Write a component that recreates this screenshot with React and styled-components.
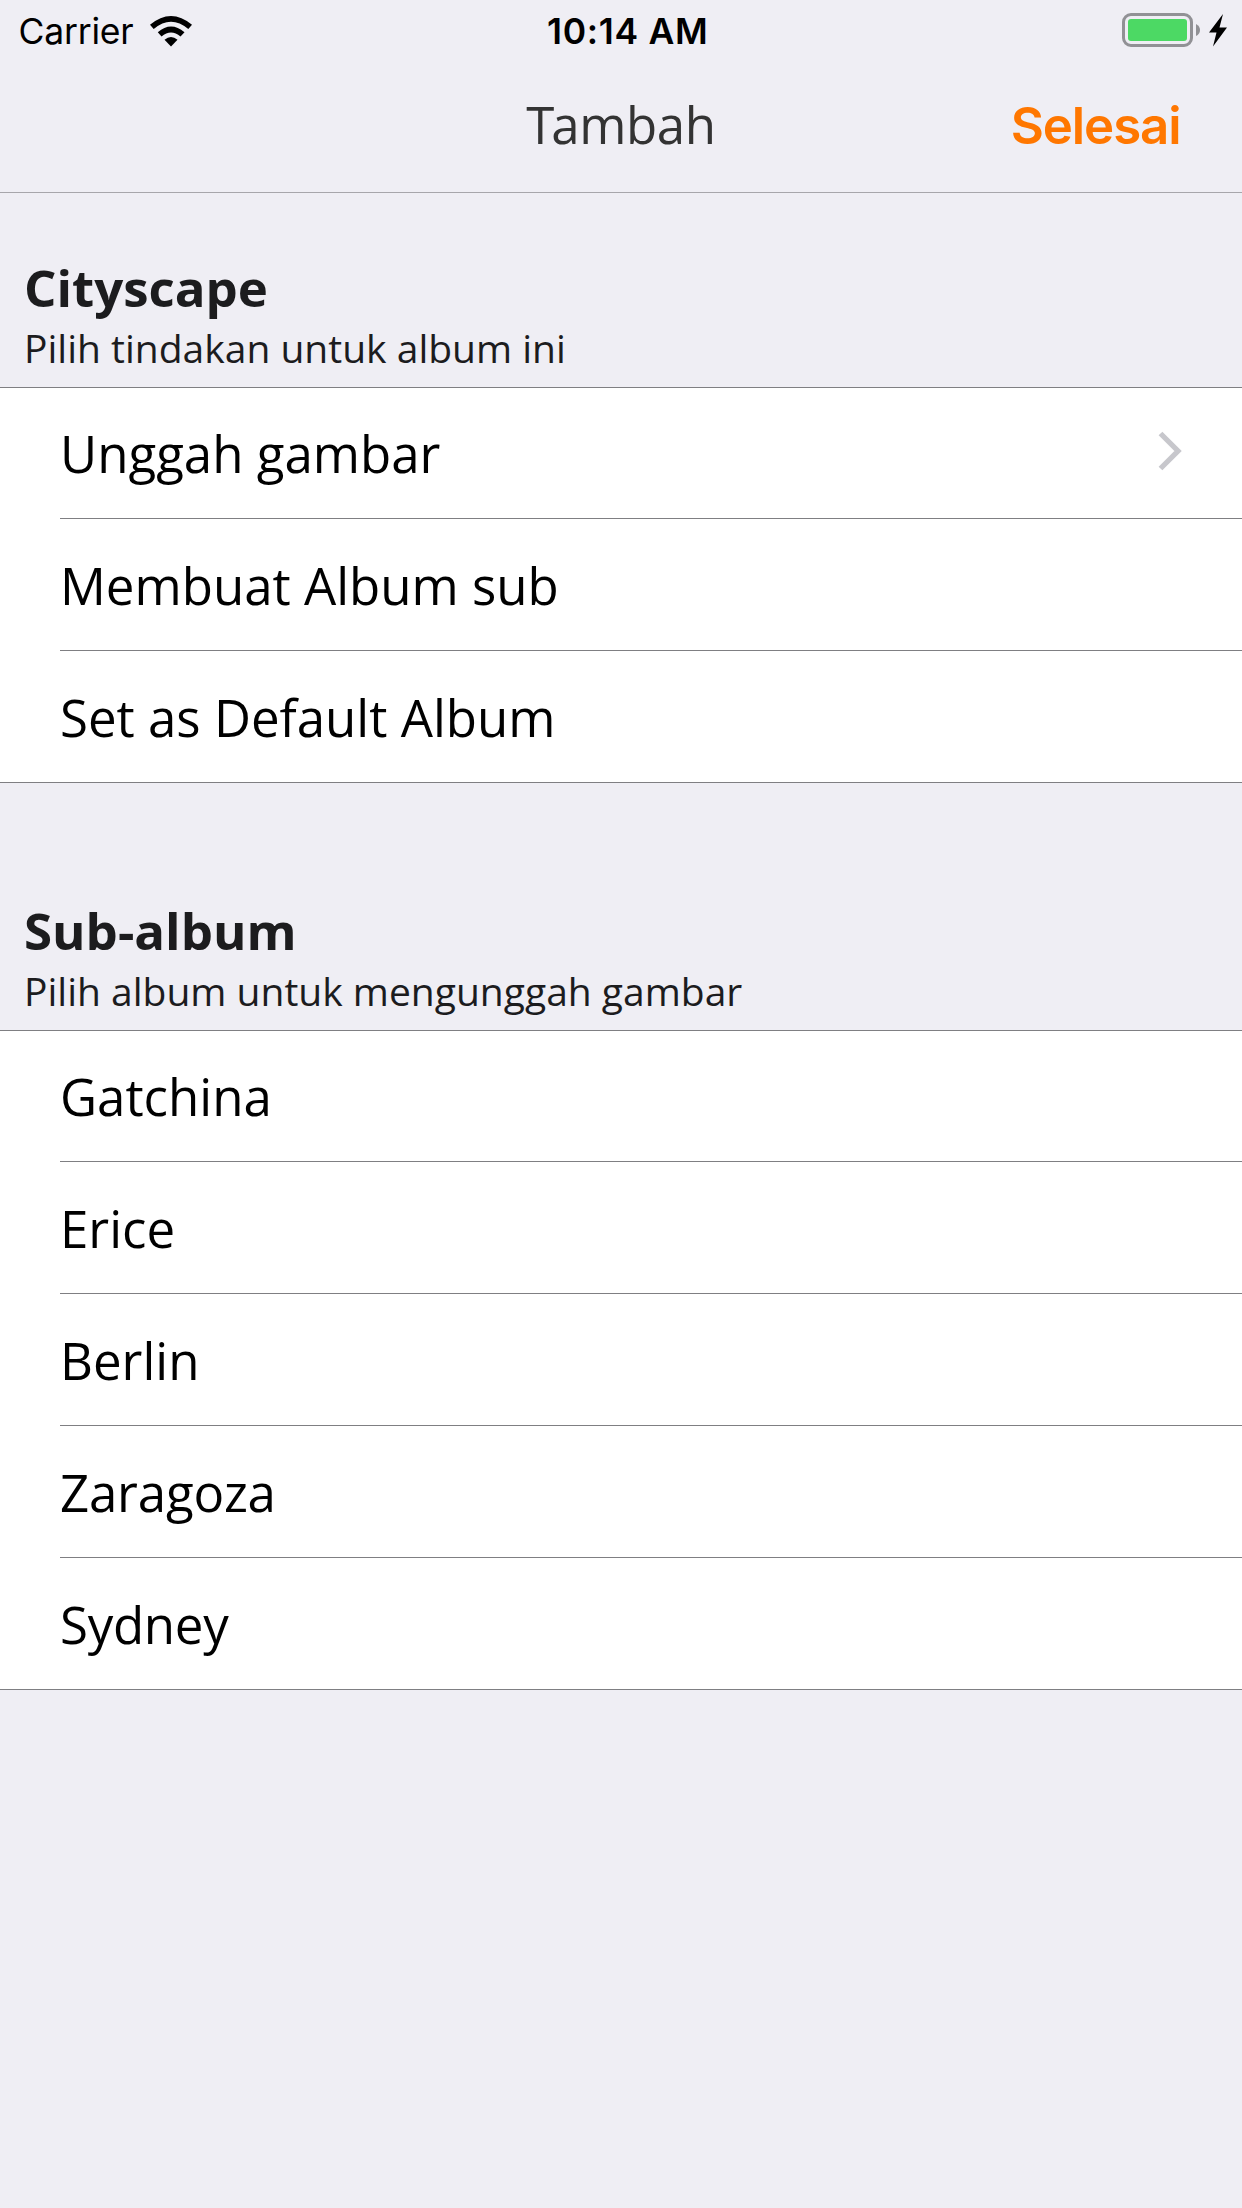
import React from "react";
import styled, { createGlobalStyle } from "styled-components";

const GlobalStyle = createGlobalStyle`
  * { box-sizing: border-box; }
  body { margin: 0; background: #efeef4; }
`;

const Screen = styled.div`
  width: 1242px;
  min-height: 2208px;
  background: #efeef4;
  font-family: "Open Sans", "Noto Sans", sans-serif;
  white-space: nowrap;
`;

const Header = styled.header`
  height: 193px;
  border-bottom: 1px solid #a7a6ab;
`;

const StatusBar = styled.div`
  height: 60px;
  display: grid;
  grid-template-columns: 1fr auto 1fr;
  align-items: center;
  padding: 2px 14px 0 18.5px;
  font-family: Inter, "Liberation Sans", sans-serif;
  font-size: 35.5px;
  color: #000;
`;

const Carrier = styled.div`
  display: flex;
  align-items: center;
  gap: 17px;
  letter-spacing: -0.2px;
`;

const Time = styled.div`
  font-weight: 600;
  letter-spacing: 0.7px;
  padding-left: 9px;
`;

const Power = styled.div`
  display: flex;
  justify-content: flex-end;
  padding-bottom: 2px;
`;

const NavBar = styled.nav`
  height: 132px;
  display: grid;
  grid-template-columns: 1fr auto 1fr;
  align-items: center;
`;

const Title = styled.h1`
  grid-column: 2;
  margin: 0;
  padding: 0 0 4px;
  font-size: 51px;
  line-height: 70px;
  font-weight: 400;
  letter-spacing: -0.4px;
  color: #333;

  &::first-letter {
    letter-spacing: -3.2px;
  }
`;

const DoneButton = styled.button`
  justify-self: end;
  margin: 0 61.5px 0 0;
  padding: 0;
  border: 0;
  background: none;
  font: 600 51px/70px Inter, "Liberation Sans", sans-serif;
  letter-spacing: -1.1px;
  color: #ff7700;
`;

const SectionHead = styled.div`
  height: ${(p) => p.$height}px;
  padding: 0 24px 13px;
  display: flex;
  flex-direction: column;
  justify-content: flex-end;
  color: #1c1c1e;
`;

const SectionTitle = styled.h2`
  margin: 0;
  font-size: 51px;
  line-height: 67px;
  font-weight: 700;
`;

const SectionNote = styled.p`
  margin: 0;
  font-size: 39px;
  line-height: 53px;
`;

const List = styled.ul`
  margin: 0;
  padding: 0;
  list-style: none;
  background: #fff;
  box-shadow: inset 0 1px #7f7f82;
`;

const Row = styled.li`
  height: 132px;
  padding-left: ${(p) => (p.$last ? 0 : 60)}px;
`;

const RowBody = styled.div`
  height: 132px;
  padding: 0 60px 0 ${(p) => (p.$last ? 60 : 0)}px;
  border-bottom: 1px solid #7f7f82;
  display: flex;
  align-items: center;
  justify-content: space-between;
  font-size: 51px;
  letter-spacing: ${(p) => p.$tracking || 0}px;
  color: #000;
`;

const Disclosure = styled.svg`
  margin-bottom: 4px;
`;

const WifiIcon = () => (
  <svg width="42" height="31" viewBox="0 0 42 31">
    <path d="M0 8.8 Q21 -8.8 42 8.8 L38.3 13 Q21 -1.6 3.7 13Z" />
    <path d="M7.8 16.3 Q21 4.6 34.5 16.3 L30.5 20.6 Q21 12.2 11.5 20.6Z" />
    <path d="M14.5 23.7 Q21 18.5 27.5 23.7 L21 30.5Z" />
  </svg>
);

const BatteryIcon = () => (
  <svg width="106" height="36" viewBox="0 0 106 36">
    <rect x="1.5" y="2.5" width="68" height="31" rx="7.5" fill="none" stroke="#919195" strokeWidth="3" />
    <rect x="6" y="7" width="59" height="22" rx="3" fill="#4cd964" />
    <path d="M74 12Q78 14 78 18T74 24Z" fill="#919195" />
    <path d="M101 2 L87 20.5 H94.5 L91 34.5 L105 15.5 H97.5Z" fill="#000" />
  </svg>
);

const Chevron = () => (
  <Disclosure width="24" height="40" viewBox="0 0 24 40">
    <path d="M2.5 2.5 L20 20 L2.5 37.5" fill="none" stroke="#c7c7cc" strokeWidth="5.3" />
  </Disclosure>
);

const sections = [
  {
    title: "Cityscape",
    note: "Pilih tindakan untuk album ini",
    height: 194,
    rows: [
      { label: "Unggah gambar", opens: true },
      { label: "Membuat Album sub" },
      { label: "Set as Default Album" },
    ],
  },
  {
    title: "Sub-album",
    note: "Pilih album untuk mengunggah gambar",
    height: 247,
    rows: [
      { label: "Gatchina" },
      { label: "Erice" },
      { label: "Berlin" },
      { label: "Zaragoza", tracking: -0.2 },
      { label: "Sydney", tracking: -0.3 },
    ],
  },
];

export default function App() {
  return (
    <Screen>
      <GlobalStyle />
      <Header>
        <StatusBar>
          <Carrier>
            <span>Carrier</span>
            <WifiIcon />
          </Carrier>
          <Time>10:14 AM</Time>
          <Power>
            <BatteryIcon />
          </Power>
        </StatusBar>
        <NavBar>
          <Title>Tambah</Title>
          <DoneButton>Selesai</DoneButton>
        </NavBar>
      </Header>
      {sections.map((s) => (
        <section key={s.title}>
          <SectionHead $height={s.height}>
            <SectionTitle>{s.title}</SectionTitle>
            <SectionNote>{s.note}</SectionNote>
          </SectionHead>
          <List>
            {s.rows.map((r, i) => {
              const last = i === s.rows.length - 1;
              return (
                <Row key={r.label} $last={last}>
                  <RowBody $last={last} $tracking={r.tracking}>
                    <span>{r.label}</span>
                    {r.opens && <Chevron />}
                  </RowBody>
                </Row>
              );
            })}
          </List>
        </section>
      ))}
    </Screen>
  );
}
